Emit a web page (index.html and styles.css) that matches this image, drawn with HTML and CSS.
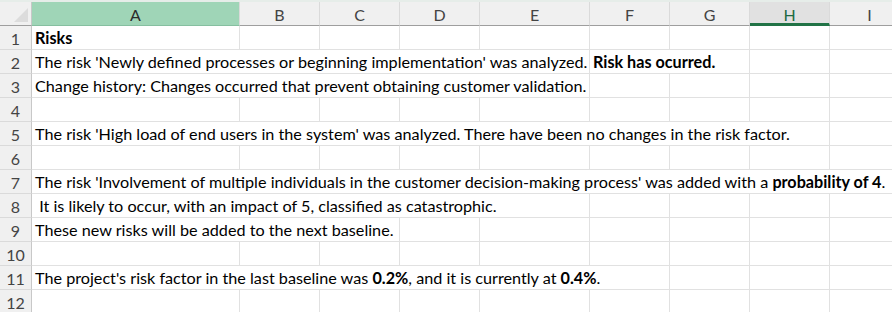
FILE: index.html
```html
<!DOCTYPE html>
<html>
<head>
<meta charset="utf-8">
<link rel="stylesheet" href="styles.css">
</head>
<body>
<div class="sheet">
  <div class="strip"></div>
  <div class="row head">
    <div class="corner"><span class="tri"></span></div>
    <div class="ch w-a sel">A</div>
    <div class="ch w-b">B</div>
    <div class="ch w-c">C</div>
    <div class="ch w-d">D</div>
    <div class="ch w-e">E</div>
    <div class="ch w-f">F</div>
    <div class="ch w-g">G</div>
    <div class="ch w-h act">H</div>
    <div class="ch w-i">I</div>
  </div>

  <div class="row">
    <div class="rh">1</div>
    <div class="c w-a"><b>Risks</b></div>
    <div class="c w-b"></div><div class="c w-c"></div><div class="c w-d"></div><div class="c w-e"></div><div class="c w-f"></div><div class="c w-g"></div><div class="c w-h"></div><div class="c w-i"></div>
  </div>
  <div class="row">
    <div class="rh">2</div>
    <div class="c span-ae">The risk 'Newly defined processes or beginning implementation' was analyzed.</div>
    <div class="c span-fg"><b>Risk has ocurred.</b></div>
    <div class="c w-h"></div><div class="c w-i"></div>
  </div>
  <div class="row">
    <div class="rh">3</div>
    <div class="c span-ae">Change history: Changes occurred that prevent obtaining customer validation.</div>
    <div class="c w-f"></div><div class="c w-g"></div><div class="c w-h"></div><div class="c w-i"></div>
  </div>
  <div class="row">
    <div class="rh">4</div>
    <div class="c w-a"></div><div class="c w-b"></div><div class="c w-c"></div><div class="c w-d"></div><div class="c w-e"></div><div class="c w-f"></div><div class="c w-g"></div><div class="c w-h"></div><div class="c w-i"></div>
  </div>
  <div class="row">
    <div class="rh">5</div>
    <div class="c span-ah">The risk 'High load of end users in the system' was analyzed. There have been no changes in the risk factor.</div>
    <div class="c w-i"></div>
  </div>
  <div class="row">
    <div class="rh">6</div>
    <div class="c w-a"></div><div class="c w-b"></div><div class="c w-c"></div><div class="c w-d"></div><div class="c w-e"></div><div class="c w-f"></div><div class="c w-g"></div><div class="c w-h"></div><div class="c w-i"></div>
  </div>
  <div class="row">
    <div class="rh">7</div>
    <div class="c span-ai">The risk 'Involvement of multiple individuals in the customer decision-making process' was added with a <b>probability of 4</b>.</div>
  </div>
  <div class="row">
    <div class="rh">8</div>
    <div class="c span-ae">&nbsp;It is likely to occur, with an impact of 5, classified as catastrophic.</div>
    <div class="c w-f"></div><div class="c w-g"></div><div class="c w-h"></div><div class="c w-i"></div>
  </div>
  <div class="row">
    <div class="rh">9</div>
    <div class="c span-ac">These new risks will be added to the next baseline.</div>
    <div class="c w-d"></div><div class="c w-e"></div><div class="c w-f"></div><div class="c w-g"></div><div class="c w-h"></div><div class="c w-i"></div>
  </div>
  <div class="row">
    <div class="rh">10</div>
    <div class="c w-a"></div><div class="c w-b"></div><div class="c w-c"></div><div class="c w-d"></div><div class="c w-e"></div><div class="c w-f"></div><div class="c w-g"></div><div class="c w-h"></div><div class="c w-i"></div>
  </div>
  <div class="row">
    <div class="rh">11</div>
    <div class="c span-af">The project's risk factor in the last baseline was <b>0.2%</b>, and it is currently at <b>0.4%</b>.</div>
    <div class="c w-g"></div><div class="c w-h"></div><div class="c w-i"></div>
  </div>
  <div class="row">
    <div class="rh">12</div>
    <div class="c w-a"></div><div class="c w-b"></div><div class="c w-c"></div><div class="c w-d"></div><div class="c w-e"></div><div class="c w-f"></div><div class="c w-g"></div><div class="c w-h"></div><div class="c w-i"></div>
  </div>
</div>
</body>
</html>
```

FILE: styles.css
```css
* { box-sizing: border-box; }
html, body { margin: 0; padding: 0; background: #fff; }
body { font-family: Lato, "Liberation Sans", sans-serif; color: #000; overflow: hidden; }
.sheet { width: 892px; height: 312px; overflow: hidden; }
.strip { height: 2px; background: #e6ede9; }
.row { display: flex; height: 24px; }
.row.head { height: 24px; }

.corner { width: 32px; flex: none; background: #f0f0f0; border-right: 1px solid #c8c8c8; border-bottom: 1px solid #9e9e9e; position: relative; }
.tri { position: absolute; right: 3px; bottom: 3px; width: 0; height: 0; border-left: 14px solid transparent; border-bottom: 14px solid #dcdcdc; }

.ch { flex: none; background: #f0f0f0; color: #444; font-size: 16px; display: flex; align-items: center; justify-content: center; border-right: 1px solid #dadada; border-bottom: 1px solid #9e9e9e; padding-top: 1px; }
.ch.sel { background: #9fd5b7; border-bottom-color: #86bfa0; color: #2b2b2b; }
.ch.act { background: #e1e1e1; border-bottom: 3px solid #217346; padding-top: 3px; color: #1e6b42; }

.rh { width: 32px; flex: none; background: #f0f0f0; color: #444; font-size: 16px; display: flex; align-items: center; justify-content: center; border-right: 1px solid #c8c8c8; border-bottom: 1px solid #dadada; padding-top: 1px; }

.c { flex: none; border-right: 1px solid #e1e1e1; border-bottom: 1px solid #e1e1e1; font-size: 16.2px; white-space: nowrap; padding: 1px 0 0 3px; line-height: 21px; overflow: visible; }
.c b { font-weight: 700; }

.w-a { width: 208px; }
.w-b { width: 80px; }
.w-c { width: 80px; }
.w-d { width: 80px; }
.w-e { width: 110px; }
.w-f { width: 80px; }
.w-g { width: 80px; }
.w-h { width: 80px; }
.w-i { width: 80px; }

.span-ac { width: 368px; }
.span-ae { width: 558px; }
.span-af { width: 638px; }
.span-ah { width: 798px; }
.span-ai { width: 878px; }
.span-fg { width: 160px; }
```
